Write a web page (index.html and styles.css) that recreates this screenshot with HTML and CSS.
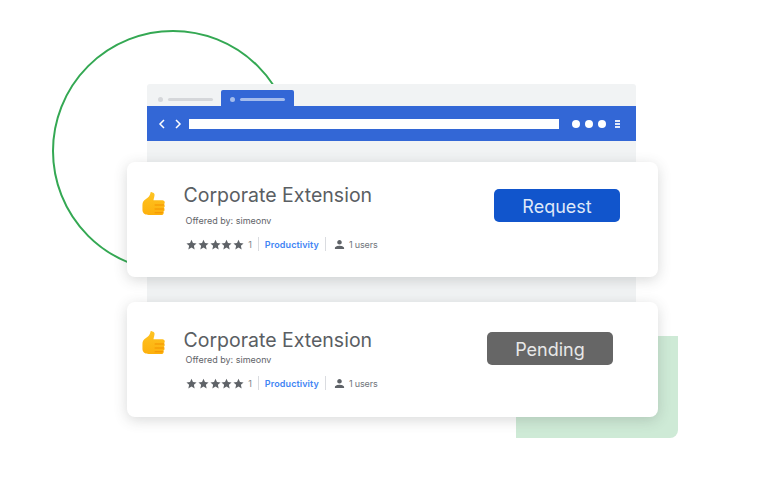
FILE: index.html
```html
<!DOCTYPE html>
<html lang="en">
<head>
    <meta charset="UTF-8">
    <meta name="viewport" content="width=device-width, initial-scale=1.0">
    <title>Corporate Extension</title>
    <link rel="stylesheet" href="styles.css">
</head>
<body>
    <svg width="0" height="0" class="defs">
        <linearGradient id="thumb-fill" x1="0" y1="0" x2="0" y2="1">
            <stop offset="0" stop-color="#fec524"/>
            <stop offset="1" stop-color="#fdb00c"/>
        </linearGradient>
        <symbol id="thumb" viewBox="0 0 26 26">
            <path fill="url(#thumb-fill)" d="M11.200.6c1.700-.4 3 .8 2.900 2.500-.1 1.900-.9 3.700-1.100 5.400h9.300c1.400 0 2.400 1 2.400 2.300 0 .8-.3 1.400-.9 1.900.6.500.9 1.100.9 1.900 0 .9-.4 1.500-1 2 .5.500.8 1.100.8 1.800 0 .9-.5 1.600-1.200 2 .2.400.3.700.3 1.100 0 1.400-1.100 2.400-2.500 2.400H8c-3.700 0-6.500-1.700-6.500-5.400v-5.200c0-2.900 1.300-4.500 3.300-5.800 2.500-1.500 4.500-3.300 5-6.100.2-1.300.5-2.600 1.400-2.800z"/>
            <path fill="#f39200" d="M14.200 13h9.500c.4 0 .8-.1 1-.3-.4.900-1.200 1.400-2.100 1.400h-8.400zM14.200 17.100h9.500c.3 0 .6-.1.900-.2-.4.800-1.200 1.300-2.100 1.300h-8.300zM14.200 21.100h8.500c.3 0 .6-.1.800-.2-.4.700-1.100 1.200-2 1.200h-7.300z"/>
        </symbol>
        <symbol id="star" viewBox="0 0 24 24">
            <path fill="#5f6368" d="M12 1.500l3.200 7.300 7.900.8-5.900 5.300 1.700 7.800-6.900-4-6.900 4 1.700-7.800L.9 9.600l7.900-.8z"/>
        </symbol>
        <symbol id="user" viewBox="0 0 24 24">
            <path fill="#5f6368" d="M12 12c2.800 0 5-2.200 5-5s-2.200-5-5-5-5 2.200-5 5 2.200 5 5 5zm0 2.500c-3.300 0-10 1.700-10 5V22h20v-2.500c0-3.300-6.700-5-10-5z"/>
        </symbol>
    </svg>

    <div class="stage">
        <div class="circle"></div>
        <div class="green-block"></div>

        <div class="browser">
            <div class="tabs">
                <div class="tab">
                    <span class="tab-dot"></span>
                    <span class="tab-line"></span>
                </div>
                <div class="tab tab-active">
                    <span class="tab-dot"></span>
                    <span class="tab-line"></span>
                </div>
            </div>
            <div class="toolbar">
                <svg class="nav" width="26" height="12" viewBox="0 0 26 12">
                    <path d="M6 2L2 6l4 4M18 2l4 4-4 4" fill="none" stroke="#fff" stroke-width="1.500"/>
                </svg>
                <div class="url"></div>
                <span class="dot"></span>
                <span class="dot"></span>
                <span class="dot"></span>
                <div class="menu">
                    <span></span>
                    <span></span>
                    <span></span>
                </div>
            </div>
        </div>

        <div class="cards">
            <div class="card">
                <svg class="thumb"><use href="#thumb"/></svg>
                <div class="info">
                    <h2 class="title">Corporate Extension</h2>
                    <p class="offered">Offered by: simeonv</p>
                    <div class="meta">
                        <span class="stars">
                            <svg><use href="#star"/></svg>
                            <svg><use href="#star"/></svg>
                            <svg><use href="#star"/></svg>
                            <svg><use href="#star"/></svg>
                            <svg><use href="#star"/></svg>
                        </span>
                        <span class="count">1</span>
                        <span class="sep"></span>
                        <span class="category">Productivity</span>
                        <span class="sep"></span>
                        <svg class="user"><use href="#user"/></svg>
                        <span class="users">1 users</span>
                    </div>
                </div>
                <button class="btn btn-request">Request</button>
            </div>

            <div class="card card-pending">
                <svg class="thumb"><use href="#thumb"/></svg>
                <div class="info">
                    <h2 class="title">Corporate Extension</h2>
                    <p class="offered">Offered by: simeonv</p>
                    <div class="meta">
                        <span class="stars">
                            <svg><use href="#star"/></svg>
                            <svg><use href="#star"/></svg>
                            <svg><use href="#star"/></svg>
                            <svg><use href="#star"/></svg>
                            <svg><use href="#star"/></svg>
                        </span>
                        <span class="count">1</span>
                        <span class="sep"></span>
                        <span class="category">Productivity</span>
                        <span class="sep"></span>
                        <svg class="user"><use href="#user"/></svg>
                        <span class="users">1 users</span>
                    </div>
                </div>
                <button class="btn btn-pending">Pending</button>
            </div>
        </div>
    </div>
</body>
</html>
```

FILE: styles.css
```css
html, body {
    margin: 0;
    background: white;
}
body {
    font-family: Inter, Roboto, sans-serif;
    overflow: hidden;
}
.defs {
    position: absolute;
}
.stage {
    position: relative;
    width: 784px;
    height: 500px;
    overflow: hidden;
}

/* background shapes */
.circle {
    position: absolute;
    left: 52px;
    top: 30px;
    width: 238px;
    height: 238px;
    border: 2px solid #34a853;
    border-radius: 50%;
}
.green-block {
    position: absolute;
    left: 516px;
    top: 336px;
    width: 162px;
    height: 102px;
    background: #ceead6;
    border-radius: 0 0 8px 0;
}

/* browser window */
.browser {
    position: absolute;
    left: 147px;
    top: 84px;
    width: 489px;
    height: 222px;
    background: #f1f3f4;
    border-radius: 3px 3px 0 0;
}
.tabs {
    display: flex;
    height: 22px;
    align-items: flex-end;
}
.tab {
    display: flex;
    align-items: center;
    gap: 5px;
    width: 74px;
    height: 16px;
    padding: 3px 0 0 11px;
    box-sizing: border-box;
}
.tab-dot {
    width: 5px;
    height: 5px;
    border-radius: 50%;
    background: #d5d7da;
}
.tab-line {
    width: 45px;
    height: 3px;
    border-radius: 2px;
    background: #d5d7da;
}
.tab-active {
    width: 73px;
    padding-left: 9px;
    background: #3367d6;
    border-radius: 2px 2px 0 0;
}
.tab-active .tab-dot,
.tab-active .tab-line {
    background: #a4bcec;
}
.toolbar {
    display: flex;
    align-items: center;
    height: 35px;
    background: #3367d6;
    padding-left: 11px;
}
.nav {
    margin-right: 5px;
}
.url {
    width: 370px;
    height: 10px;
    background: white;
    margin-right: 13px;
}
.dot {
    width: 8px;
    height: 8px;
    border-radius: 50%;
    background: white;
    margin-right: 5px;
}
.menu {
    display: flex;
    flex-direction: column;
    gap: 1px;
    margin-left: 4px;
}
.menu span {
    width: 5px;
    height: 2px;
    background: #e4eaf9;
}

/* extension cards */
.cards {
    position: relative;
    display: flex;
    flex-direction: column;
    gap: 25px;
    width: 531px;
    padding: 162px 0 0 127px;
}
.card {
    position: relative;
    display: flex;
    height: 115px;
    background: white;
    border-radius: 8px;
    box-shadow: 0 3px 14px rgba(60,64,67,0.2);
}
.thumb {
    width: 25px;
    height: 25px;
    margin: 30px 0 0 14px;
    flex-shrink: 0;
}
.info {
    margin-left: 17.500px;
    width: 300px;
}
.title {
    margin: 20px 0 0 0;
    font-size: 19.500px;
    line-height: 26px;
    font-weight: 400;
    color: #5a5e63;
}
.offered {
    margin: 7px 0 0 2px;
    font-size: 9px;
    line-height: 12px;
    color: #5f6368;
}
.meta {
    display: flex;
    align-items: center;
    margin: 10px 0 0 2.500px;
    height: 14px;
    font-size: 9px;
    color: #80868b;
}
.stars {
    display: flex;
    gap: 0.800px;
}
.stars svg {
    width: 11px;
    height: 11px;
}
.count {
    margin-left: 4px;
}
.sep {
    width: 1px;
    height: 14px;
    background: #dadce0;
    margin: 0 6px;
}
.category {
    color: #4285f4;
    font-weight: 600;
    letter-spacing: 0.100px;
}
.user {
    width: 11px;
    height: 11px;
    margin: 0 4px 0 2px;
}
.users {
    color: #70757a;
    letter-spacing: -0.150px;
}
.btn {
    position: absolute;
    left: 367px;
    top: 27px;
    width: 126px;
    height: 33px;
    padding: 1px 0 0 0;
    border: none;
    border-radius: 5px;
    font-family: inherit;
    font-size: 18px;
}
.btn-request {
    background: #1155cc;
    color: #dfe8f8;
}
.btn-pending {
    background: #666666;
    color: #e8e8e8;
    left: 360px;
    top: 30px;
}

/* second card sits its title lower and tighter */
.card-pending .title {
    margin-top: 25px;
}
.card-pending .offered {
    margin-top: 1px;
}
.card-pending .thumb {
    margin-top: 29px;
}
```
